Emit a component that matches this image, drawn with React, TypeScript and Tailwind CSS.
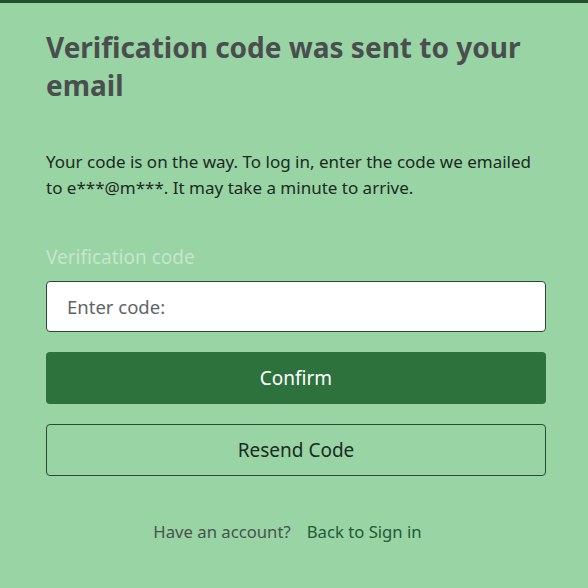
export default function App() {
  return (
    <div
      className="min-h-[588px] w-full bg-[#98d4a4] border-t-[3px] border-[#24502e]"
      style={{ fontFamily: '"Noto Sans", "Open Sans", sans-serif' }}
    >
      <div className="pl-[46px] pr-[42px] pt-[25px]">
        {/* Title */}
        <h1 className="text-[28px] leading-[38px] font-bold text-[#4a4e4f]">
          Verification code was sent to your email
        </h1>

        <p className="mt-[45px] text-[17px] leading-[26px] text-[#1d2a22]">
          Your code is on the way. To log in, enter the code we emailed to e***@m***. It may take a minute to arrive.
        </p>

        {/* Code form */}
        <form className="mt-[44px] flex flex-col" onSubmit={e => e.preventDefault()}>
          <label className="text-[19px] leading-[24px] text-[#c6e6cc]">Verification code</label>
          <input
            type="text"
            placeholder="Enter code:"
            className="mt-[12px] h-[51px] w-full rounded-[4px] border border-[#2c4a33] bg-white px-5 text-[18.5px] text-[#333] placeholder:text-[#5d6568] outline-none"
          />
          <button
            type="submit"
            className="mt-[20px] h-[52px] w-full rounded-[4px] bg-[#2d713d] text-[19px] text-white"
          >
            Confirm
          </button>
          <button
            type="button"
            className="mt-[20px] h-[52px] w-full rounded-[4px] border border-[#2c4a33] text-[19px] text-[#1d2a22]"
          >
            Resend Code
          </button>
        </form>

        <div className="mt-[44px] pr-[17px] flex justify-center gap-4 text-[16.7px] leading-[24px]">
          <span className="text-[#4a5250]">Have an account?</span>
          <a href="#" className="text-[#245a35]">Back to Sign in</a>
        </div>
      </div>
    </div>
  );
}
